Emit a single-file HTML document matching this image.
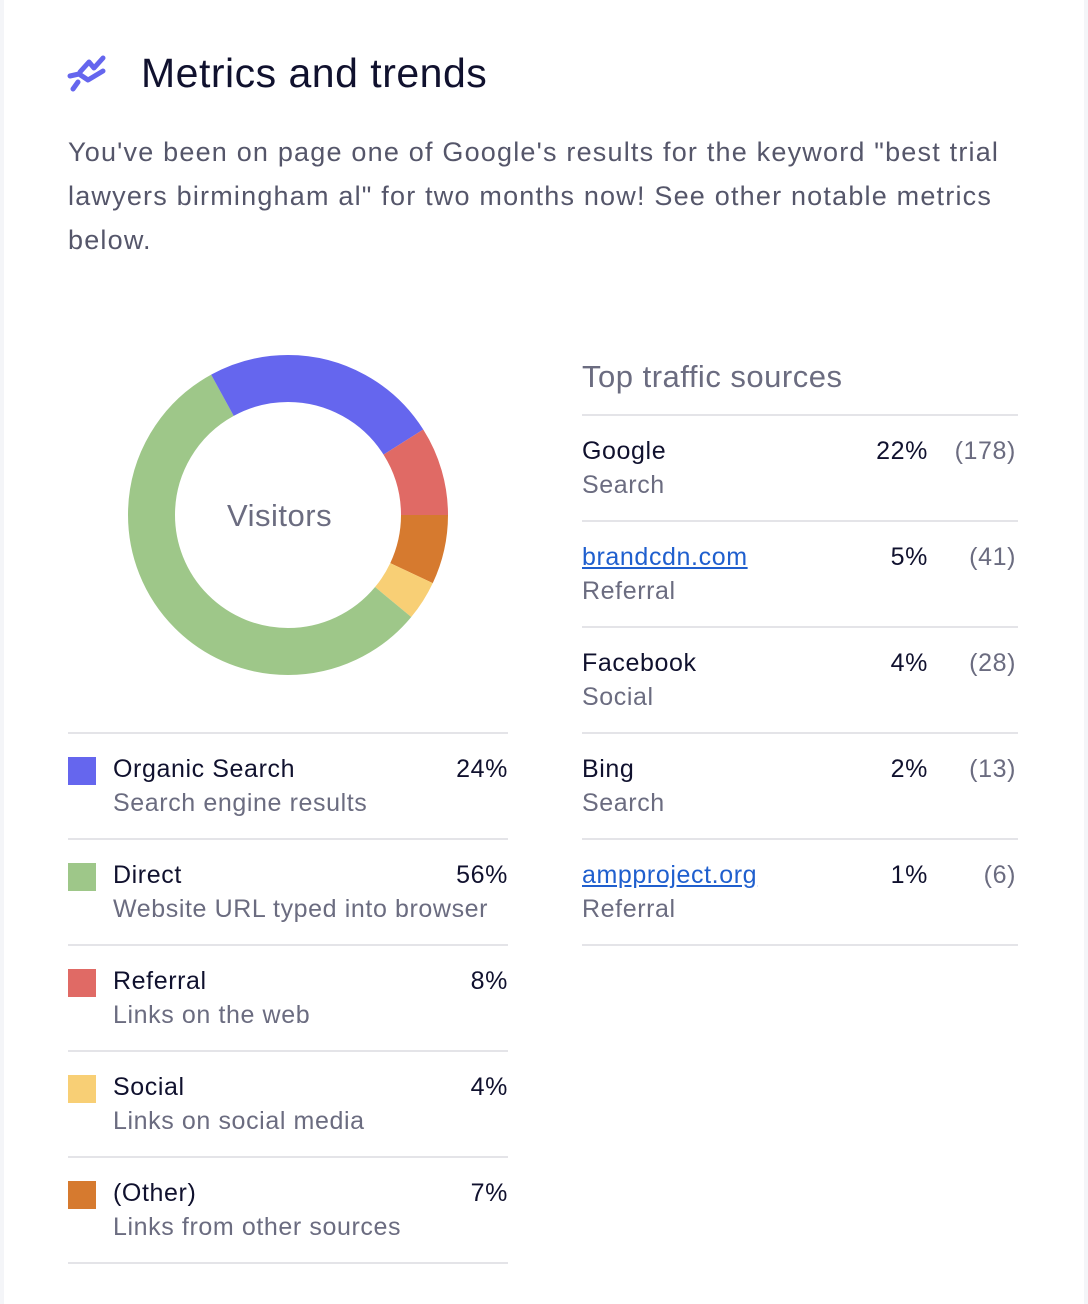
<!DOCTYPE html>
<html><head><meta charset="utf-8"><style>
body{margin:0;width:1088px;height:1304px;background:#f4f5f8;font-family:"Liberation Sans",sans-serif;position:relative;overflow:hidden}
.card{position:absolute;left:4px;top:0;width:1080px;height:1304px;background:#fff}
.a{position:absolute;white-space:nowrap}
.dk{color:#10112e}.gr{color:#6b6c80}
.line{position:absolute;height:2px;background:#e4e4e8}
.p{font-size:25px;letter-spacing:0.6px}
.lk{color:#1f5fce;text-decoration:underline}
.sw{position:absolute;width:28px;height:28px}
</style></head><body>
<div class="card"></div>
<svg class="a" style="left:66px;top:54px" width="42" height="38" viewBox="0 0 42 38">
<g fill="none" stroke="#6566ee" stroke-width="5" stroke-linecap="round" stroke-linejoin="round">
<path d="M4 22 L13 20 L22 26 L37 17"/><path d="M14 18 L23 8 L28 14 L37 4"/><path d="M12 28 L7 35"/></g></svg>
<div class="a dk" style="left:141px;top:50px;font-size:41px;letter-spacing:0.5px">Metrics and trends</div>
<div class="a gr" style="left:68px;top:130px;font-size:27px;line-height:44px;white-space:normal;width:950px;letter-spacing:1.2px;color:#55566a">You've been on page one of Google's results for the keyword "best trial lawyers birmingham al" for two months now! See other notable metrics below.</div>

<svg class="a" style="left:128px;top:355px" width="320" height="320" viewBox="0 0 320 320">
<g fill="none" stroke-width="47">
<circle cx="160" cy="160" r="136.5" stroke="#d67a2f" stroke-dasharray="60.04 857.7" stroke-dashoffset="0"/>
<circle cx="160" cy="160" r="136.5" stroke="#f8cf75" stroke-dasharray="34.3 857.7" stroke-dashoffset="-60.04"/>
<circle cx="160" cy="160" r="136.5" stroke="#9ec789" stroke-dasharray="480.3 857.7" stroke-dashoffset="-94.34"/>
<circle cx="160" cy="160" r="136.5" stroke="#6566ee" stroke-dasharray="205.8 857.7" stroke-dashoffset="-574.6"/>
<circle cx="160" cy="160" r="136.5" stroke="#e06a65" stroke-dasharray="77.3 857.7" stroke-dashoffset="-780.4"/>
</g></svg>
<div class="a gr" style="left:227px;top:498px;font-size:31px;letter-spacing:0.5px">Visitors</div>

<div class="line" style="left:68px;width:440px;top:732px"></div>
<div class="line" style="left:68px;width:440px;top:838px"></div>
<div class="line" style="left:68px;width:440px;top:944px"></div>
<div class="line" style="left:68px;width:440px;top:1050px"></div>
<div class="line" style="left:68px;width:440px;top:1156px"></div>
<div class="line" style="left:68px;width:440px;top:1262px"></div>

<div class="sw" style="left:68px;top:757px;background:#6566ee"></div>
<div class="a dk p" style="left:113px;top:755px">Organic Search</div>
<div class="a dk p" style="right:580px;top:755px">24%</div>
<div class="a gr p" style="left:113px;top:789px">Search engine results</div>

<div class="sw" style="left:68px;top:863px;background:#9ec789"></div>
<div class="a dk p" style="left:113px;top:861px">Direct</div>
<div class="a dk p" style="right:580px;top:861px">56%</div>
<div class="a gr p" style="left:113px;top:895px">Website URL typed into browser</div>

<div class="sw" style="left:68px;top:969px;background:#e06a65"></div>
<div class="a dk p" style="left:113px;top:967px">Referral</div>
<div class="a dk p" style="right:580px;top:967px">8%</div>
<div class="a gr p" style="left:113px;top:1001px">Links on the web</div>

<div class="sw" style="left:68px;top:1075px;background:#f8cf75"></div>
<div class="a dk p" style="left:113px;top:1073px">Social</div>
<div class="a dk p" style="right:580px;top:1073px">4%</div>
<div class="a gr p" style="left:113px;top:1107px">Links on social media</div>

<div class="sw" style="left:68px;top:1181px;background:#d67a2f"></div>
<div class="a dk p" style="left:113px;top:1179px">(Other)</div>
<div class="a dk p" style="right:580px;top:1179px">7%</div>
<div class="a gr p" style="left:113px;top:1213px">Links from other sources</div>

<div class="a gr" style="left:582px;top:359px;font-size:31px;letter-spacing:0.5px">Top traffic sources</div>
<div class="line" style="left:582px;width:436px;top:414px"></div>
<div class="line" style="left:582px;width:436px;top:520px"></div>
<div class="line" style="left:582px;width:436px;top:626px"></div>
<div class="line" style="left:582px;width:436px;top:732px"></div>
<div class="line" style="left:582px;width:436px;top:838px"></div>
<div class="line" style="left:582px;width:436px;top:944px"></div>

<div class="a dk p" style="left:582px;top:437px">Google</div>
<div class="a dk p" style="right:160px;top:437px">22%</div>
<div class="a gr p" style="right:72px;top:437px">(178)</div>
<div class="a gr p" style="left:582px;top:471px">Search</div>

<div class="a p lk" style="left:582px;top:543px">brandcdn.com</div>
<div class="a dk p" style="right:160px;top:543px">5%</div>
<div class="a gr p" style="right:72px;top:543px">(41)</div>
<div class="a gr p" style="left:582px;top:577px">Referral</div>

<div class="a dk p" style="left:582px;top:649px">Facebook</div>
<div class="a dk p" style="right:160px;top:649px">4%</div>
<div class="a gr p" style="right:72px;top:649px">(28)</div>
<div class="a gr p" style="left:582px;top:683px">Social</div>

<div class="a dk p" style="left:582px;top:755px">Bing</div>
<div class="a dk p" style="right:160px;top:755px">2%</div>
<div class="a gr p" style="right:72px;top:755px">(13)</div>
<div class="a gr p" style="left:582px;top:789px">Search</div>

<div class="a p lk" style="left:582px;top:861px">ampproject.org</div>
<div class="a dk p" style="right:160px;top:861px">1%</div>
<div class="a gr p" style="right:72px;top:861px">(6)</div>
<div class="a gr p" style="left:582px;top:895px">Referral</div>
</body></html>
